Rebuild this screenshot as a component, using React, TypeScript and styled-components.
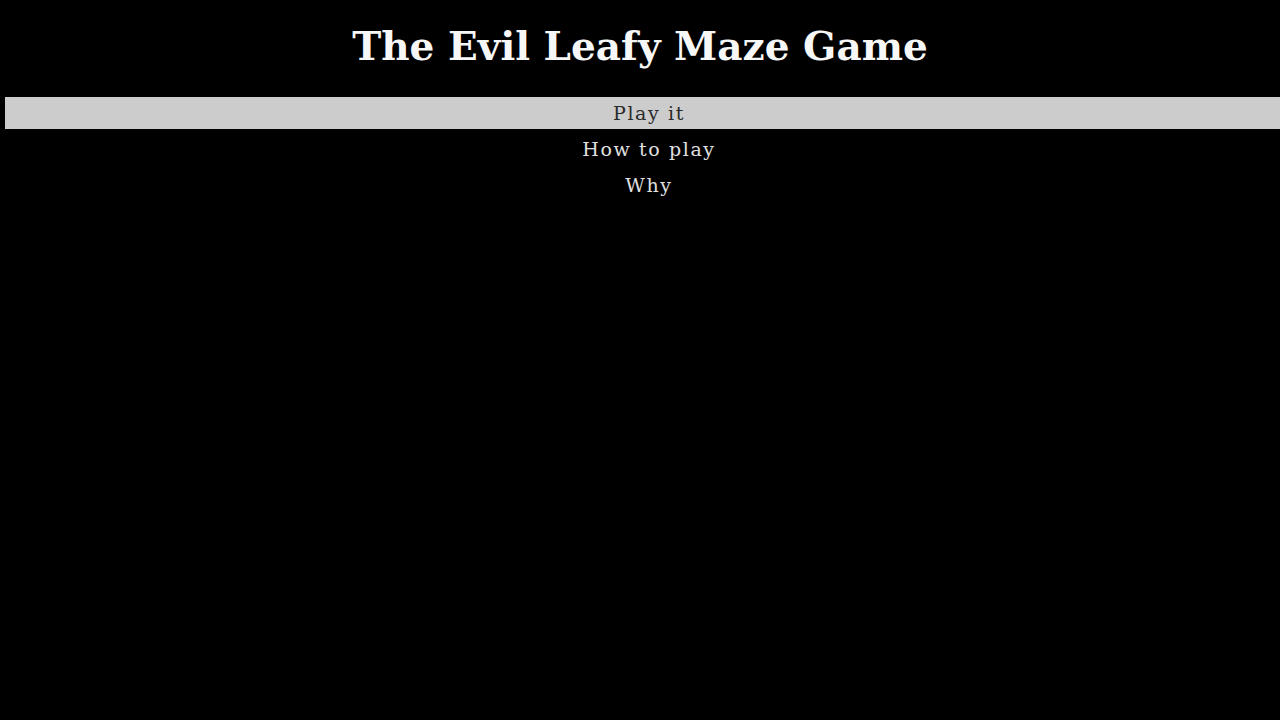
import React from 'react'
import styled, { createGlobalStyle } from 'styled-components'

const GlobalStyle = createGlobalStyle`
  html, body {
    margin: 0;
    padding: 0;
    background: #000;
    height: 100%;
  }
  body {
    font-family: "DejaVu Serif", "Liberation Serif", serif;
    color: #e6e6e6;
  }
`

const Page = styled.div`
  min-height: 100vh;
  background: #000;
`

const Title = styled.h1`
  margin: 0;
  height: 97px;
  padding-top: 22px;
  box-sizing: border-box;
  text-align: center;
  font-size: 39px;
  line-height: 48px;
  font-weight: bold;
  color: #f7f7f7;
`

const Menu = styled.nav`
  display: flex;
  flex-direction: column;
  padding-left: 5px;
`

const MenuItem = styled.a<{ $active?: boolean }>`
  display: block;
  height: ${({ $active }) => ($active ? '32px' : '36px')};
  line-height: ${({ $active }) => ($active ? '32px' : '40px')};
  padding-left: 13px;
  text-align: center;
  font-size: 19px;
  letter-spacing: 1.6px;
  color: ${({ $active }) => ($active ? '#2a2a2a' : '#e0e0e0')};
  background: ${({ $active }) => ($active ? '#cccccc' : 'transparent')};
  text-decoration: none;
  cursor: pointer;
`

export default function App() {
  return (
    <>
      <GlobalStyle />
      <Page>
        <Title>The Evil Leafy Maze Game</Title>
        <Menu>
          <MenuItem $active>Play it</MenuItem>
          <MenuItem>How to play</MenuItem>
          <MenuItem>Why</MenuItem>
        </Menu>
      </Page>
    </>
  )
}
